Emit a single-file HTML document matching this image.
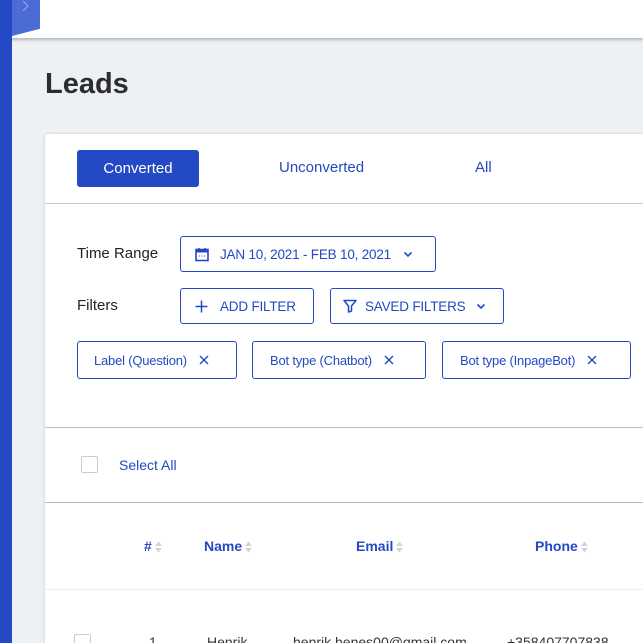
<!DOCTYPE html><html><head><style>
html,body{margin:0;width:643px;height:643px;overflow:hidden}
body{background:#eef1f4;font-family:"Liberation Sans",sans-serif;position:relative}
.abs{position:absolute}
.b{color:#2349c4}
.btn{position:absolute;border:1px solid #2349c4;border-radius:3px;box-sizing:border-box;display:flex;align-items:center;color:#2349c4;font-size:13.5px;background:#fff;letter-spacing:-0.2px}
.srt{display:inline-block;vertical-align:middle;margin-left:3px}
</style></head><body>
<div class="abs" style="left:0;top:0;width:643px;height:38px;background:#fff;box-shadow:0 2px 3px rgba(0,0,0,.25)"></div>
<div class="abs" style="left:0;top:0;width:12px;height:643px;background:#2349c4"></div>
<div class="abs" style="left:12px;top:0;width:28px;height:36px;background:#4a6cd4;clip-path:polygon(0 0,100% 0,100% 80%,0 100%)"></div>
<svg class="abs" style="left:21px;top:0" width="10" height="14" viewBox="0 0 10 14"><path d="M2 1l5 5-5 5" fill="none" stroke="#8aa0e4" stroke-width="1.3"/></svg>
<div class="abs" style="left:45px;top:68px;font-size:29px;font-weight:bold;color:#2d2d2d">Leads</div>
<div class="abs" style="left:45px;top:134px;width:620px;height:520px;background:#fff;box-shadow:0 0 3px rgba(0,0,0,.15);border-radius:4px 0 0 0"></div>
<div class="abs" style="left:77px;top:150px;width:122px;height:37px;background:#2349c4;border-radius:3px;color:#fff;font-size:15px;text-align:center;line-height:37px">Converted</div>
<div class="abs b" style="left:279px;top:159px;font-size:15px">Unconverted</div>
<div class="abs b" style="left:475px;top:159px;font-size:15px">All</div>
<div class="abs" style="left:45px;top:203px;width:600px;height:1px;background:#ccc"></div>
<div class="abs" style="left:77px;top:245px;font-size:15px;color:#222">Time Range</div>
<div class="btn" style="left:180px;top:236px;width:256px;height:36px;padding-left:14px">
<svg width="14" height="15" viewBox="0 0 14 15"><rect x="1" y="2.5" width="12" height="11" fill="none" stroke="#2349c4" stroke-width="1.6"/><rect x="1" y="2.5" width="12" height="3" fill="#2349c4"/><path d="M4 1v3M10 1v3" stroke="#2349c4" stroke-width="1.5"/><path d="M4 9h1M6.5 9h1M9 9h1" stroke="#2349c4"/></svg>
<span style="margin-left:11px">JAN 10, 2021 - FEB 10, 2021</span>
<svg style="margin-left:12px" width="10" height="7" viewBox="0 0 10 7"><path d="M1.5 1.5l3.5 3.5 3.5-3.5" fill="none" stroke="#2349c4" stroke-width="1.6"/></svg></div>
<div class="abs" style="left:77px;top:297px;font-size:15px;color:#222">Filters</div>
<div class="btn" style="left:180px;top:288px;width:134px;height:36px;padding-left:14px"><svg width="13" height="13" viewBox="0 0 13 13"><path d="M6.5 0.5v12M0.5 6.5h12" stroke="#2349c4" stroke-width="1.5"/></svg><span style="margin-left:12px">ADD FILTER</span></div>
<div class="btn" style="left:330px;top:288px;width:174px;height:36px;padding-left:12px">
<svg width="14" height="14" viewBox="0 0 14 14"><path d="M1 1.5h12L8.5 7v5L5.5 13V7z" fill="none" stroke="#2349c4" stroke-width="1.5" stroke-linejoin="round"/></svg>
<span style="margin-left:8px">SAVED FILTERS</span>
<svg style="margin-left:11px" width="10" height="7" viewBox="0 0 10 7"><path d="M1.5 1.5l3.5 3.5 3.5-3.5" fill="none" stroke="#2349c4" stroke-width="1.6"/></svg></div>
<div class="btn" style="left:77px;top:341px;width:160px;height:38px;padding-left:16px;font-size:13px">Label (Question)<svg style="margin-left:12px" width="10" height="10" viewBox="0 0 10 10"><path d="M1 1l8 8M9 1l-8 8" stroke="#2349c4" stroke-width="1.4"/></svg></div>
<div class="btn" style="left:252px;top:341px;width:174px;height:38px;padding-left:17px;font-size:13px">Bot type (Chatbot)<svg style="margin-left:12px" width="10" height="10" viewBox="0 0 10 10"><path d="M1 1l8 8M9 1l-8 8" stroke="#2349c4" stroke-width="1.4"/></svg></div>
<div class="btn" style="left:442px;top:341px;width:189px;height:38px;padding-left:17px;font-size:13px">Bot type (InpageBot)<svg style="margin-left:12px" width="10" height="10" viewBox="0 0 10 10"><path d="M1 1l8 8M9 1l-8 8" stroke="#2349c4" stroke-width="1.4"/></svg></div>
<div class="abs" style="left:45px;top:427px;width:600px;height:1px;background:#bbb"></div>
<div class="abs" style="left:81px;top:456px;width:15px;height:15px;border:1.5px solid #c8ccd6;border-radius:2px"></div>
<div class="abs b" style="left:119px;top:457px;font-size:14px">Select All</div>
<div class="abs" style="left:45px;top:502px;width:600px;height:1px;background:#bbb"></div>
<div class="abs b" style="left:144px;top:538px;font-size:14px;font-weight:bold">#<svg class="srt" width="7" height="12" viewBox="0 0 7 12"><path d="M3.5 0.5L7 5H0zM3.5 11.5L7 7H0z" fill="#d0d4dc"/></svg></div>
<div class="abs b" style="left:204px;top:538px;font-size:14px;font-weight:bold">Name<svg class="srt" width="7" height="12" viewBox="0 0 7 12"><path d="M3.5 0.5L7 5H0zM3.5 11.5L7 7H0z" fill="#d0d4dc"/></svg></div>
<div class="abs b" style="left:356px;top:538px;font-size:14px;font-weight:bold">Email<svg class="srt" width="7" height="12" viewBox="0 0 7 12"><path d="M3.5 0.5L7 5H0zM3.5 11.5L7 7H0z" fill="#d0d4dc"/></svg></div>
<div class="abs b" style="left:535px;top:538px;font-size:14px;font-weight:bold">Phone<svg class="srt" width="7" height="12" viewBox="0 0 7 12"><path d="M3.5 0.5L7 5H0zM3.5 11.5L7 7H0z" fill="#d0d4dc"/></svg></div>
<div class="abs" style="left:45px;top:589px;width:600px;height:1px;background:#eee"></div>
<div class="abs" style="left:74px;top:634px;width:15px;height:15px;border:1.5px solid #c8ccd6;border-radius:2px"></div>
<div class="abs" style="left:149px;top:634px;font-size:14px;color:#333">1</div>
<div class="abs" style="left:207px;top:634px;font-size:14px;color:#333">Henrik</div>
<div class="abs" style="left:293px;top:634px;font-size:14px;color:#333">henrik.henes00@gmail.com</div>
<div class="abs" style="left:507px;top:634px;font-size:14px;color:#333">+358407707838</div>
</body></html>
